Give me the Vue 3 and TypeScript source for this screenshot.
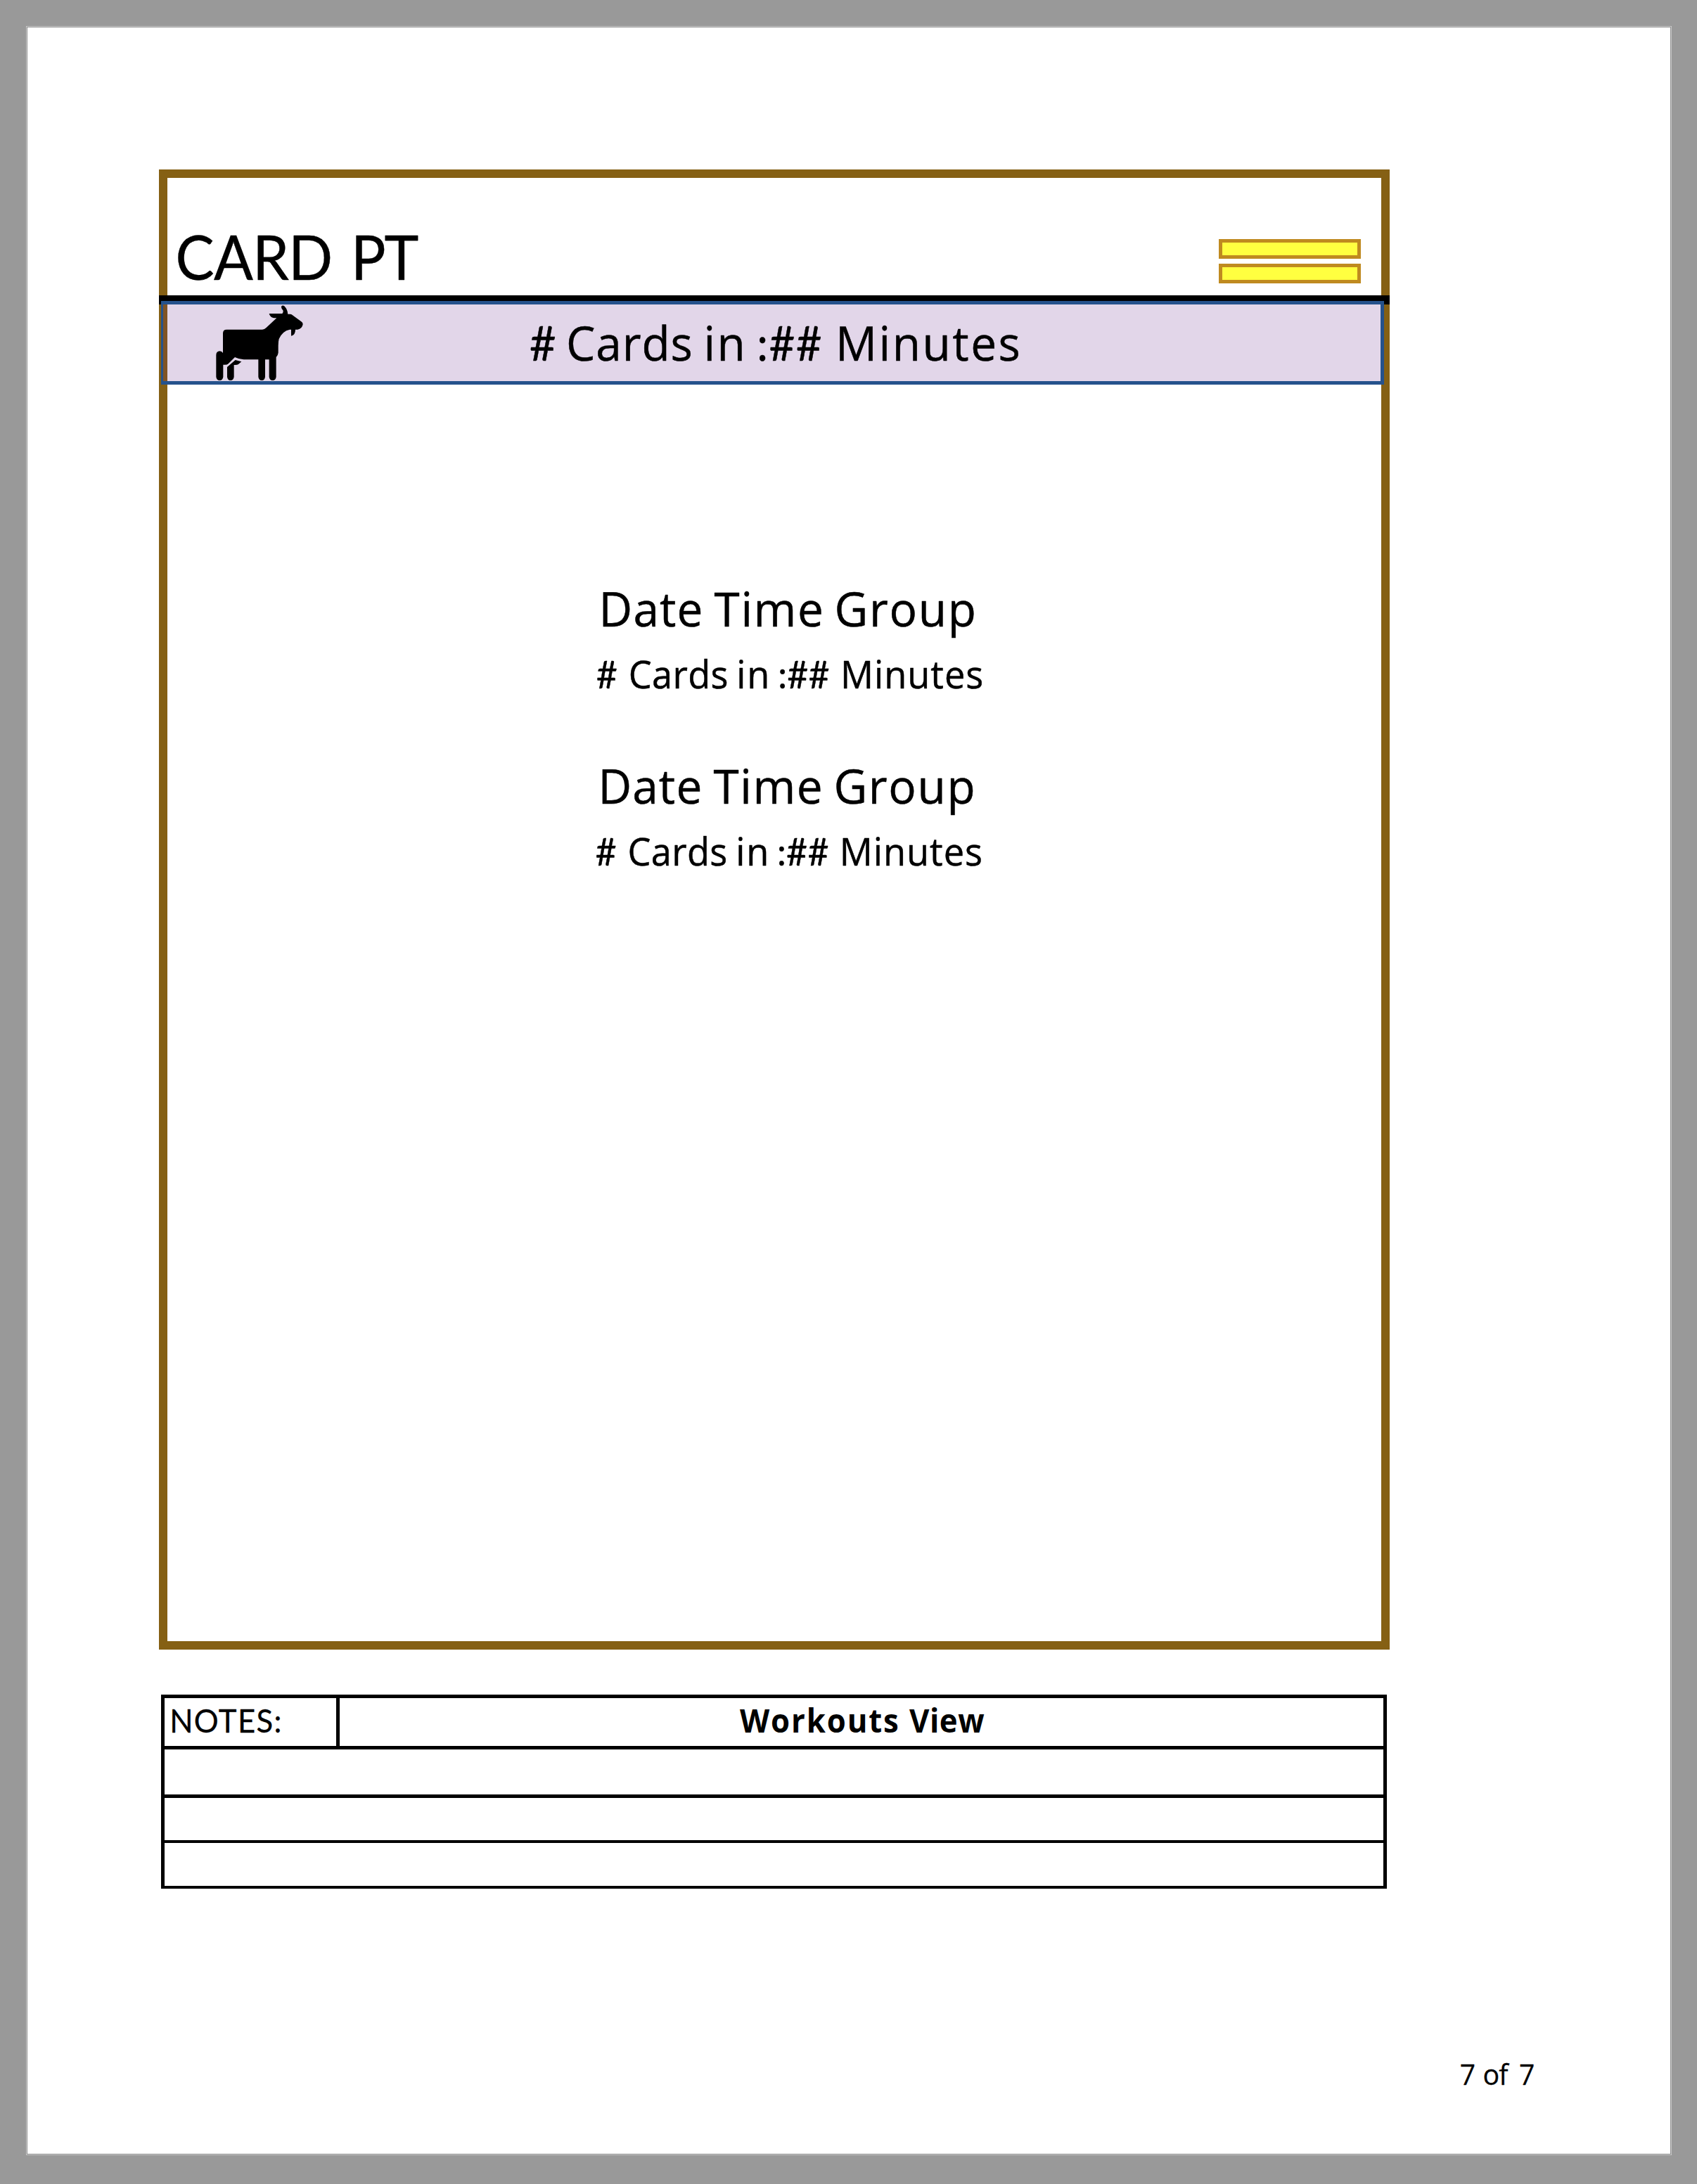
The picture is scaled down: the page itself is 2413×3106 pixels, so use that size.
<script setup lang="ts">
interface Word { t: string; a: number; b: number }
interface Line {
  left: number; top: number; width: number; height: number
  base: number; size: number; weight: number; squeeze: number
  family: string; stroke: number
  words: Word[]
}

const ctx = document.createElement('canvas').getContext('2d')!

// Places a word so its ink spans exactly a..b, narrowing glyphs and spreading the rest as tracking.
function fit(line: Line, w: Word) {
  const hash = w.t.includes('#')
  const family = hash ? 'Lato' : line.family
  ctx.font = `${line.weight} ${line.size}px "${family}"`
  const m = ctx.measureText(w.t)
  const l = -m.actualBoundingBoxLeft
  const ink = m.actualBoundingBoxRight - l
  const n = w.t.length
  const sx = n > 1 ? (hash ? 0.94 : line.squeeze) : (w.b - w.a) / ink
  const spacing = n > 1 ? ((w.b - w.a) / sx - ink) / (n - 1) : 0
  return {
    transform: `translate(${w.a - l * sx} ${line.base}) scale(${sx} 1)`,
    'letter-spacing': spacing.toFixed(3),
    'font-family': `${family}, sans-serif`,
    'stroke-width': line.stroke,
  }
}

const words = (...v: [string, number, number][]): Word[] => v.map(([t, a, b]) => ({ t, a, b }))
const humanist = { family: 'Open Sans', stroke: 0.5 }
const caps = { family: 'Lato', stroke: 0.4 }

const title: Line = {
  ...caps, left: 238, top: 253, width: 1495, height: 167, base: 397.7, size: 87.1, weight: 400, squeeze: 0.95,
  words: words(['CARD', 253.3, 470], ['PT', 505.7, 595]),
}
const banner: Line = {
  ...humanist, left: 238, top: 433, width: 1725, height: 109, base: 513, size: 67, weight: 400, squeeze: 0.98,
  words: words(['#', 754, 789.8], ['Cards', 809, 982], ['in', 1005.3, 1054.8], [':##', 1080, 1167.7], ['Minutes', 1193.9, 1448]),
}
const entry = (dx: number, top: number): Line[] => [
  {
    ...humanist, left: 238, top, width: 1726, height: 88, base: top + 66, size: 67, weight: 400, squeeze: 0.98,
    words: words(['Date', 857.5 + dx, 996.9 + dx], ['Time', 1015.6 + dx, 1168.3 + dx], ['Group', 1190.5 + dx, 1385 + dx]),
  },
  {
    ...humanist, left: 238, top: top + 88, width: 1726, height: 88, base: top + 154.3, size: 54.5, weight: 400, squeeze: 0.96,
    words: words(['#', 849 + dx, 877.3 + dx], ['Cards', 896.6 + dx, 1033.6 + dx], ['in', 1051.2 + dx, 1090.2 + dx], [':##', 1109 + dx, 1179 + dx], ['Minutes', 1199.7 + dx, 1396.4 + dx]),
  },
]
const groups = [entry(0, 825), entry(-1.2, 1077)]
const notes: Line = {
  ...caps, stroke: 0.3, left: 234, top: 2415, width: 244, height: 68, base: 2464, size: 46, weight: 400, squeeze: 0.95,
  words: words(['NOTES:', 245, 398]),
}
const view: Line = {
  ...humanist, stroke: 0, left: 483, top: 2415, width: 1484, height: 68, base: 2464, size: 46, weight: 700, squeeze: 0.95,
  words: words(['Workouts', 1052, 1277], ['View', 1293, 1399.3]),
}
const pager: Line = {
  ...humanist, stroke: 0.3, left: 2060, top: 2920, width: 140, height: 60, base: 2965, size: 41, weight: 400, squeeze: 0.96,
  words: words(['7', 2076.7, 2096.7], ['of', 2110.3, 2146.7], ['7', 2161, 2181]),
}
const box = (l: Line) => ({ viewBox: `${l.left} ${l.top} ${l.width} ${l.height}`, width: l.width, height: l.height })
</script>

<template>
  <main class="viewer">
    <article class="page">
      <section class="frame">
        <header class="head">
          <svg class="line" v-bind="box(title)">
            <text v-for="(w, i) in title.words" :key="i" :font-size="title.size" :font-weight="title.weight" v-bind="fit(title, w)">{{ w.t }}</text>
          </svg>
          <div class="bars"><i></i><i></i></div>
        </header>
        <div class="rule"></div>
        <div class="banner">
          <svg class="line" v-bind="box(banner)">
            <svg x="305" y="433" width="127" height="110" viewBox="285 609 381 330">
              <path d="M321 732Q321 716 337 716H489Q498 716 505 709L550 667H538Q522 664 518 648H574Q580 642 577 634Q569 625 570 618Q574 611 582 615Q597 630 598 650H608Q614 650 620 656L657 683Q662 687 662 694Q658 714 640 716H630Q630 740 612 743V716H606Q575 722 560 756Q557 768 557 785V815Q556 825 548 834V918Q546 933 533 933Q520 933 518 918V844H501V918Q499 933 487 933Q474 933 472 918V844H410Q390 843 372 834L344 862Q338 868 322 866V918Q320 933 307 933Q294 933 292 918V824Q293 809 307 808Q317 808 321 816Z" />
              <path d="M374 846L400 853L387 864Q382 868 368 867V918Q366 933 353 933Q341 933 339 918V876Z" />
            </svg>
            <text v-for="(w, i) in banner.words" :key="i" :font-size="banner.size" :font-weight="banner.weight" v-bind="fit(banner, w)">{{ w.t }}</text>
          </svg>
        </div>
        <div class="groups">
          <div v-for="(g, k) in groups" :key="k" class="group">
            <svg v-for="(l, j) in g" :key="j" class="line" v-bind="box(l)">
              <text v-for="(w, i) in l.words" :key="i" :font-size="l.size" :font-weight="l.weight" v-bind="fit(l, w)">{{ w.t }}</text>
            </svg>
          </div>
        </div>
      </section>

      <section class="notes">
        <div class="row first">
          <div class="label">
            <svg class="line" v-bind="box(notes)">
              <text v-for="(w, i) in notes.words" :key="i" :font-size="notes.size" :font-weight="notes.weight" v-bind="fit(notes, w)">{{ w.t }}</text>
            </svg>
          </div>
          <svg class="line" v-bind="box(view)">
            <text v-for="(w, i) in view.words" :key="i" :font-size="view.size" :font-weight="view.weight" v-bind="fit(view, w)">{{ w.t }}</text>
          </svg>
        </div>
        <div class="row second"></div>
        <div class="row third"></div>
        <div class="row fourth"></div>
      </section>

      <footer class="pager">
        <svg class="line" v-bind="box(pager)">
          <text v-for="(w, i) in pager.words" :key="i" :font-size="pager.size" :font-weight="pager.weight" v-bind="fit(pager, w)">{{ w.t }}</text>
        </svg>
      </footer>
    </article>
  </main>
</template>

<style>
html, body { margin: 0; background: #999; }
</style>

<style scoped>
* { box-sizing: border-box; }
.viewer {
  width: 2413px;
  height: 3106px;
  padding: 37px 36px 41px 37px;
  background: #999;
  font-family: "Open Sans", "Noto Sans", sans-serif;
}
.page {
  display: flex;
  flex-direction: column;
  align-items: flex-start;
  width: 2340px;
  height: 3028px;
  padding: 202px 0 0 187px;
  border: 1px solid #c8c8c8;
  background: #fff;
  box-shadow: inset 0 0 0 1px #8e8e8e;
}
.line { display: block; flex: none; overflow: visible; fill: #000; }
.line text { stroke: #000; stroke-linejoin: round; }
.frame {
  width: 1750px;
  height: 2105px;
  margin-left: 1px;
  margin-top: 1px;
  border: 12px solid #856014;
}
.head { display: flex; height: 167px; }
.bars { display: flex; flex-direction: column; gap: 7px; padding-top: 87px; }
.bars i { width: 202px; height: 28px; border: 5px solid #bf8a20; background: #ffff40; }
.rule { height: 13px; margin: 0 -12px; background: #000; }
.banner {
  position: relative;
  height: 119px;
  margin: -5px -4px 0 -9px;
  padding-left: 6px;
  border: 5px solid #25528c;
  border-left-width: 3px;
  background: linear-gradient(90deg, #7f5426 6px, #e2d6e9 6px);
}
.groups { display: flex; flex-direction: column; gap: 76px; padding-top: 278px; }
.notes {
  width: 1743px;
  height: 276px;
  margin: 64px 0 0 4px;
  border: 5px solid #000;
  border-bottom-width: 4px;
}
.row { border-bottom: 5px solid #000; }
.first { display: flex; height: 73px; }
.label { width: 249px; border-right: 5px solid #000; }
.second { height: 69px; }
.third { height: 64px; border-bottom-width: 4px; }
.fourth { height: 61px; border-bottom: 0; }
.pager { margin: 234px 0 0 1835px; }
</style>
